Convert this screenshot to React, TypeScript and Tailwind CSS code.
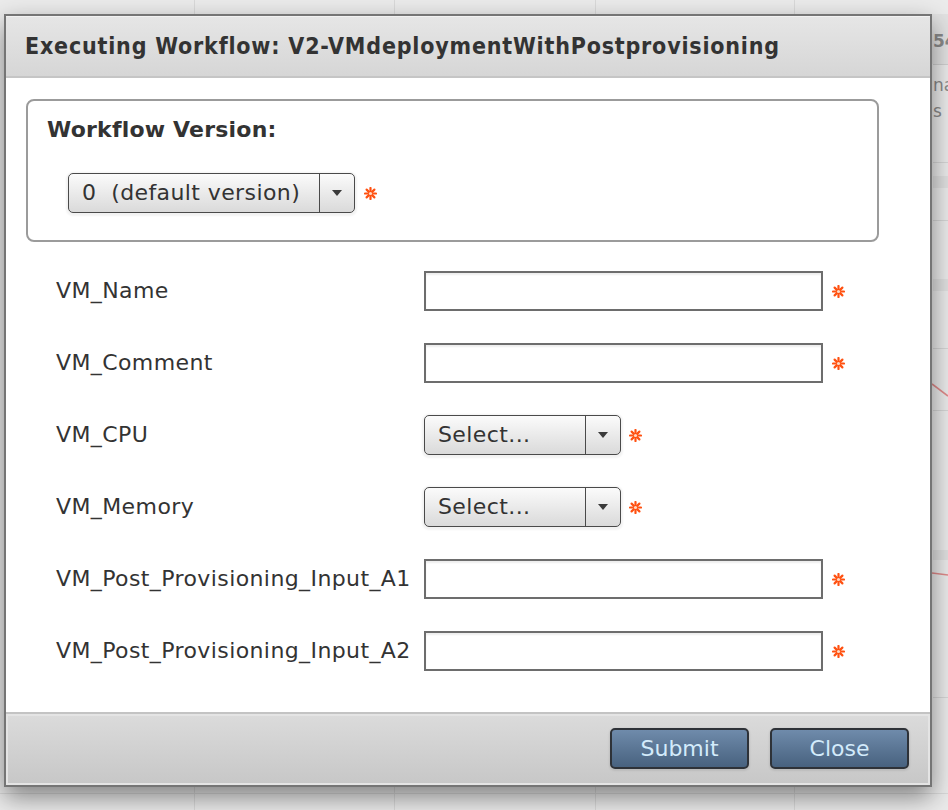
import React from 'react';

const Asterisk = () => (
  <svg width="13" height="13" viewBox="0 0 13 13" className="shrink-0">
    <g stroke="#ff5111" strokeWidth="2.2" strokeLinecap="round">
      <line x1="6.5" y1="1" x2="6.5" y2="12" />
      <line x1="1" y1="6.5" x2="12" y2="6.5" />
      <line x1="2.6" y1="2.6" x2="10.4" y2="10.4" />
      <line x1="10.4" y1="2.6" x2="2.6" y2="10.4" />
    </g>
    <circle cx="6.5" cy="6.5" r="1.6" fill="#ffd9c4" />
  </svg>
);

const SelectBox = ({ label, width }: { label: string; width: string }) => (
  <div
    className={`flex h-[40px] ${width} items-stretch rounded-[5px] border-[1.5px] border-[#4a4a4a] bg-gradient-to-b from-[#fbfbfb] to-[#dadada] shadow-[0_1px_2px_2px_rgba(0,0,0,0.05)]`}
  >
    <div className="flex flex-1 items-center whitespace-pre pl-[13px] text-[22px] leading-none tracking-[0.4px] text-[#333]">
      {label}
    </div>
    <div className="flex w-[35px] items-center justify-center border-l-[1.5px] border-[#4a4a4a]">
      <div className="h-0 w-0 border-x-[5px] border-t-[6px] border-x-transparent border-t-[#3a3a3a]" />
    </div>
  </div>
);

const TextBox = () => (
  <div className="h-[40px] w-[399px] border-2 border-[#6d6d6d] bg-white shadow-[inset_0_2px_2px_rgba(0,0,0,0.07)]" />
);

type Field = { name: string; kind: 'text' | 'select' };

const fields: Field[] = [
  { name: 'VM_Name', kind: 'text' },
  { name: 'VM_Comment', kind: 'text' },
  { name: 'VM_CPU', kind: 'select' },
  { name: 'VM_Memory', kind: 'select' },
  { name: 'VM_Post_Provisioning_Input_A1', kind: 'text' },
  { name: 'VM_Post_Provisioning_Input_A2', kind: 'text' },
];

const DialogButton = ({ children }: { children: React.ReactNode }) => (
  <button className="flex h-[41px] w-[139px] items-center justify-center rounded-[5px] border-2 border-[#2e3238] bg-gradient-to-b from-[#6f8bab] to-[#48627f] text-[22px] leading-none text-[#d3ebfb] shadow-[0_1px_2px_1px_rgba(0,0,0,0.08)]">
    {children}
  </button>
);

export default function App() {
  return (
    <div className="relative h-[810px] w-[948px] overflow-hidden bg-[#ebebeb] font-['DejaVu_Sans',Verdana,sans-serif]">
      {/* dimmed page behind the dialog */}
      <div className="absolute inset-0">
        <div className="absolute left-[194px] top-0 h-full w-px bg-[#d9d9d9]" />
        <div className="absolute left-[394px] top-0 h-full w-px bg-[#d9d9d9]" />
        <div className="absolute left-[595px] top-0 h-full w-px bg-[#d9d9d9]" />
        <div className="absolute left-[794px] top-0 h-full w-px bg-[#d9d9d9]" />
        <div className="absolute left-0 top-[793px] h-px w-full bg-[#d9d9d9]" />
        <div className="absolute right-0 top-[14px] h-[50px] w-[20px] bg-[#e2e2e2]" />
        <div className="absolute left-[933px] top-[33px] text-[17px] font-bold leading-none text-[#8a8a8a]">54</div>
        <div className="absolute left-[933px] top-[64px] h-px w-[20px] bg-[#cfcfcf]" />
        <div className="absolute left-[933px] top-[77px] text-[17px] leading-none text-[#8a8a8a]">na</div>
        <div className="absolute left-[933px] top-[103px] text-[17px] leading-none text-[#8a8a8a]">s</div>
        <div className="absolute left-[933px] top-[162px] h-px w-[20px] bg-[#d6d6d6]" />
        <div className="absolute left-[933px] top-[176px] h-[12px] w-[20px] bg-[#e0e0e0]" />
        <div className="absolute left-[933px] top-[220px] h-px w-[20px] bg-[#d6d6d6]" />
        <div className="absolute left-[933px] top-[279px] h-[12px] w-[20px] bg-[#e0e0e0]" />
        <div className="absolute left-[933px] top-[348px] h-px w-[20px] bg-[#d6d6d6]" />
        <div className="absolute left-[933px] top-[410px] h-px w-[20px] bg-[#d6d6d6]" />
        <div className="absolute left-[933px] top-[550px] h-[10px] w-[20px] bg-[#e0e0e0]" />
        <div className="absolute left-[933px] top-[697px] h-px w-[20px] bg-[#d6d6d6]" />
        <svg className="absolute left-[932px] top-[370px]" width="16" height="220" viewBox="0 0 16 220">
          <polyline points="0,14 16,26" fill="none" stroke="#e08a8a" strokeWidth="1.6" />
          <polyline points="0,203 16,205" fill="none" stroke="#e08a8a" strokeWidth="1.6" />
        </svg>
      </div>

      {/* dialog */}
      <div className="relative ml-[4px] mt-[14px] flex h-[773px] w-[928px] flex-col border-2 border-[#757575] bg-white shadow-[0_10px_24px_rgba(0,0,0,0.45)]">
        <div className="flex h-[62px] items-center border-b-2 border-[#c5c5c5] bg-gradient-to-b from-[#e6e6e6] to-[#d6d6d6] pl-[19px] shadow-[inset_0_1px_0_#f2f2f2]">
          <h1 className="font-['DejaVu_Sans_Condensed','DejaVu_Sans',sans-serif] text-[23px] font-bold leading-none tracking-[0.8px] text-[#333] font-stretch-condensed">
            Executing Workflow: V2-VMdeploymentWithPostprovisioning
          </h1>
        </div>

        <div className="flex flex-1 flex-col pl-[20px] pt-[21px]">
          <div className="flex h-[143px] w-[853px] flex-col rounded-[8px] border-2 border-[#9b9b9b] pl-[19px] pt-[16px]">
            <div className="text-[22px] font-bold leading-[26px] tracking-[0.2px] text-[#333]">Workflow Version:</div>
            <div className="ml-[21px] mt-[30px] flex items-center gap-[9px]">
              <SelectBox label="0  (default version)" width="w-[287px]" />
              <Asterisk />
            </div>
          </div>

          <div className="mt-[29px] flex flex-col gap-[32px] pl-[30px]">
            {fields.map((f) => (
              <div key={f.name} className="flex h-[40px] items-center">
                <div className="w-[368px] text-[22px] leading-none tracking-[0.4px] text-[#333]">{f.name}</div>
                {f.kind === 'text' ? (
                  <div className="flex items-center gap-[9px]">
                    <TextBox />
                    <Asterisk />
                  </div>
                ) : (
                  <div className="flex items-center gap-[8px]">
                    <SelectBox label="Select..." width="w-[197px]" />
                    <Asterisk />
                  </div>
                )}
              </div>
            ))}
          </div>
        </div>

        <div className="flex h-[73px] justify-end gap-[21px] border-t-2 border-[#c3c3c3] bg-gradient-to-b from-[#dbdbdb] to-[#c7c7c7] pr-[21px] pt-[14px] shadow-[inset_0_0_0_2px_#e4e4e4]">
          <DialogButton>Submit</DialogButton>
          <DialogButton>Close</DialogButton>
        </div>
      </div>
    </div>
  );
}
